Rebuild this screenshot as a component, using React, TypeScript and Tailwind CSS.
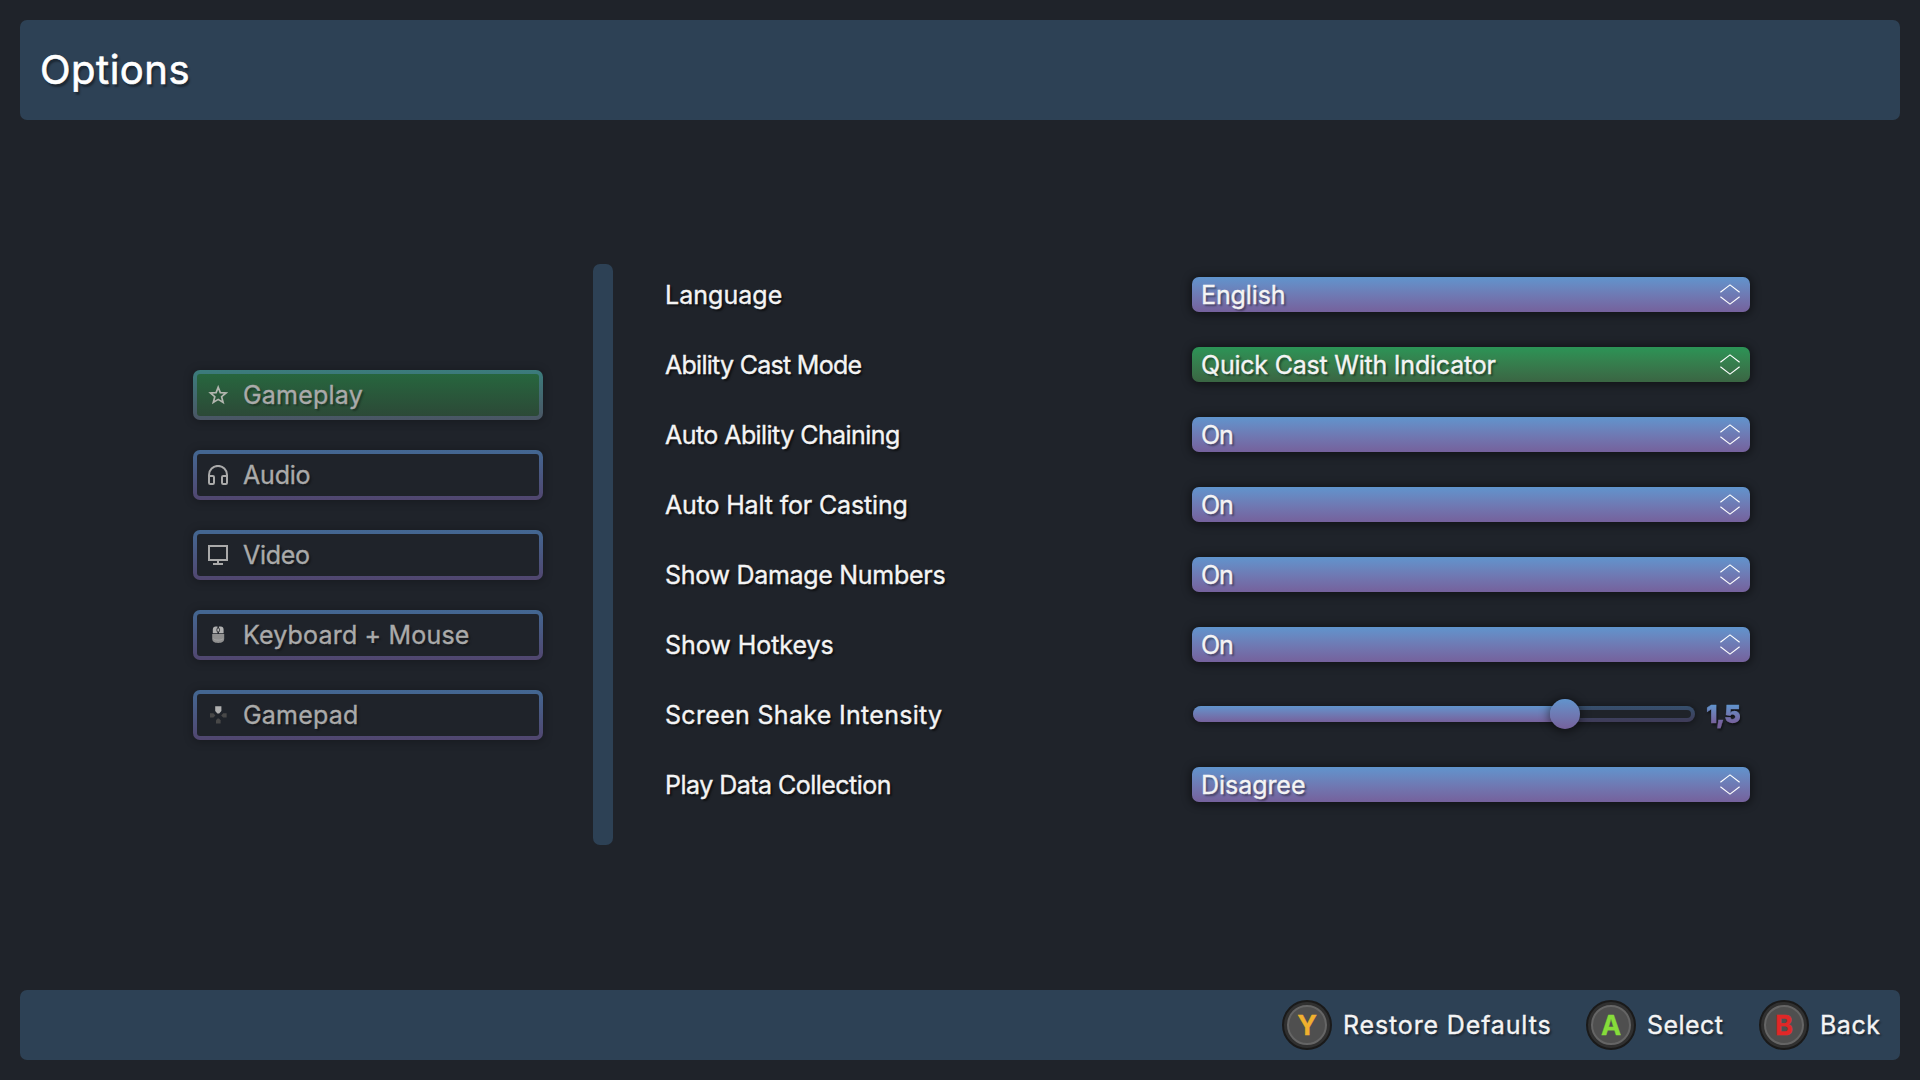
import React from 'react';

const StarIcon = () => (
  <svg width="20" height="20" viewBox="0 0 20 20" fill="none" stroke="#b4b7b0" strokeWidth="1.7">
    <path d="M10.2 2.2L12.3 7.6L18 8L13.6 11.7L15.1 17.4L10.2 14.4L5.3 17.4L6.8 11.7L2.4 8L8.1 7.6Z" />
  </svg>
);

const HeadphonesIcon = () => (
  <svg width="20" height="20" viewBox="0 0 20 20" fill="none" stroke="#aaaaaa" strokeWidth="2">
    <path d="M1 12V9.9a9 9 0 0 1 18 0V12" />
    <rect x="1" y="11" width="5" height="8" rx="1.2" />
    <rect x="14" y="11" width="5" height="8" rx="1.2" />
  </svg>
);

const MonitorIcon = () => (
  <svg width="20" height="20" viewBox="0 0 20 20" fill="none" stroke="#aaaaaa" strokeWidth="2">
    <rect x="1" y="1" width="18" height="14" />
    <path d="M10 15V18M5 19H15" />
  </svg>
);

const MouseIcon = () => (
  <svg width="20" height="20" viewBox="0 0 20 20">
    <path d="M4.8 8.2V4.8C4.8 2.6 6 1.6 7.6 1.6H9.5V8.2Z" fill="#b0b0b0" />
    <path d="M15.6 8.2V4.8C15.6 2.6 14.4 1.6 12.8 1.6H10.9V8.2Z" fill="#b0b0b0" />
    <rect x="8.9" y="3" width="2.6" height="4" rx="1.2" fill="#b0b0b0" stroke="#2a2d31" strokeWidth="0.9" />
    <path d="M4.2 9H16.2V13.6C16.2 16.6 14.4 18 10.2 18S4.2 16.6 4.2 13.6Z" fill="#8f8f8f" />
    <path d="M5.4 13.6C6.8 15.6 13.6 15.6 15 13.6" fill="none" stroke="#a8a8a8" strokeWidth="0.8" />
  </svg>
);

const DpadIcon = () => (
  <svg width="20" height="20" viewBox="0 0 20 20" fill="#484848">
    <path d="M7.2 1.2H13.4V6L11.2 8.6H9.4L7.2 6Z" fill="#b0b0b0" />
    <path d="M2 8.3H5.4L7.4 10.4L5.4 12.5H2Z" />
    <path d="M18.6 8.3H15.2L13.2 10.4L15.2 12.5H18.6Z" />
    <path d="M8 18.6V15.2L9.6 13.4H11L12.6 15.2V18.6Z" />
  </svg>
);

const SelectorIcon = () => (
  <svg width="20" height="21" viewBox="0 0 20 21" fill="none" stroke="#ffffff" strokeWidth="1.15">
    <path d="M0.4 8.2L10 0.9L19.6 8.2" />
    <path d="M0.4 12.8L10 20.1L19.6 12.8" />
  </svg>
);

const tabs = [
  { icon: <StarIcon />, title: 'Gameplay', tracking: 'tracking-[0.21px]', active: true },
  { icon: <HeadphonesIcon />, title: 'Audio', tracking: 'tracking-[-0.2px]' },
  { icon: <MonitorIcon />, title: 'Video', tracking: 'tracking-[-0.3px]' },
  { icon: <MouseIcon />, title: 'Keyboard + Mouse', tracking: 'tracking-[0.18px]' },
  { icon: <DpadIcon />, title: 'Gamepad', tracking: 'tracking-[0.21px]' },
];

const settings = [
  { label: 'Language', tracking: 'tracking-[0.04px]', value: 'English', valueTracking: 'tracking-[-0.1px]' },
  {
    label: 'Ability Cast Mode',
    tracking: 'tracking-[-0.72px]',
    value: 'Quick Cast With Indicator',
    valueTracking: 'tracking-[-0.22px]',
    active: true,
  },
  { label: 'Auto Ability Chaining', tracking: 'tracking-[-0.56px]', value: 'On', valueTracking: 'tracking-[-1px]' },
  { label: 'Auto Halt for Casting', tracking: 'tracking-[-0.16px]', value: 'On', valueTracking: 'tracking-[-1px]' },
  { label: 'Show Damage Numbers', tracking: 'tracking-[-0.29px]', value: 'On', valueTracking: 'tracking-[-1px]' },
  { label: 'Show Hotkeys', tracking: 'tracking-[-0.03px]', value: 'On', valueTracking: 'tracking-[-1px]' },
  { label: 'Screen Shake Intensity', tracking: 'tracking-[0.31px]', slider: { percent: 74, text: '1,5' } },
  { label: 'Play Data Collection', tracking: 'tracking-[-0.52px]', value: 'Disagree', valueTracking: 'tracking-[-0.05px]' },
];

const hints = [
  { button: 'Y', color: 'text-[#f0b02e]', label: 'Restore Defaults', tracking: 'tracking-[0.85px]', width: 'w-[304px]' },
  { button: 'A', color: 'text-[#86dc3a]', label: 'Select', tracking: 'tracking-[0.45px]', width: 'w-[173px]' },
  { button: 'B', color: 'text-[#e12727]', label: 'Back', tracking: 'tracking-[0.5px]', width: 'w-[121px]' },
];

const Select = ({ value, tracking, active }: { value?: string; tracking?: string; active?: boolean }) => (
  <div
    className={`flex h-[35px] w-[558px] items-center justify-between rounded-[7px] bg-linear-to-b pr-2.5 pl-[9px] shadow-[0_1px_8px_2px_rgba(0,0,0,0.45)] ${
      active ? 'from-[#2b9456] to-[#3a6543]' : 'from-[#6094cd] to-[#75619c]'
    }`}
  >
    <span className={`pt-px ${tracking} [text-shadow:2px_2px_2px_rgba(0,0,0,0.4)]`}>{value}</span>
    <SelectorIcon />
  </div>
);

const Slider = ({ percent, text }: { percent: number; text: string }) => (
  <div className="flex h-[35px] w-[558px] items-center pb-px pl-px">
    <div className="relative h-4 w-[502px] rounded-full border-4 border-transparent shadow-[0_1px_7px_1px_rgba(0,0,0,0.4)] [background:linear-gradient(#1f232a,#1f232a)_padding-box,linear-gradient(#36506d,#3f3b58)_border-box]">
      <div
        className="absolute -top-1 -left-1 h-4 rounded-l-full bg-linear-to-b from-[#6094cd] to-[#75619c]"
        style={{ width: `${percent + 1}%` }}
      />
      <div
        className="absolute -top-[11px] size-[30px] -translate-x-1/2 rounded-full bg-linear-to-b from-[#6094cd] to-[#75619c] shadow-[0_1px_10px_2px_rgba(0,0,0,0.45)]"
        style={{ left: `${percent + 0.4}%` }}
      />
    </div>
    <span className="ml-[11px] bg-linear-to-b from-[#6094cd] from-20% to-[#75619c] to-80% bg-clip-text leading-[30px] font-black tracking-[-1.2px] text-transparent drop-shadow-[1px_2px_1px_rgba(0,0,0,0.5)]">
      {text}
    </span>
  </div>
);

const App: React.FC = () => {
  return (
    <div className="flex h-screen w-screen flex-col overflow-hidden bg-[#1f232a] p-5 font-[Inter,sans-serif] text-[25px] leading-none whitespace-nowrap text-[#f4f4f4] [-webkit-text-stroke:0.35px]">
      <header className="flex h-[100px] shrink-0 items-center rounded-[7px] bg-[#2d4155] pl-5">
        <h1 className="text-[40px] tracking-[0.5px] text-white [text-shadow:2px_3px_2px_rgba(0,0,0,0.4)] [-webkit-text-stroke:0.6px]">
          Options
        </h1>
      </header>

      <main className="flex flex-1 items-center pl-[173px]">
        <nav className="flex w-[350px] flex-col gap-[30px]">
          {tabs.map((tab) => (
            <div
              key={tab.title}
              className={`flex h-[50px] items-center gap-[15px] rounded-[7px] border-4 border-transparent pl-[11px] text-[#aaaaaa] shadow-[0_1px_8px_1px_rgba(0,0,0,0.25)] ${
                tab.active
                  ? '[background:linear-gradient(#27663e,#2c4937)_padding-box,linear-gradient(#3b7c7c,#4a5564)_border-box]'
                  : '[background:linear-gradient(#1f232a,#1f232a)_padding-box,linear-gradient(#436792,#51466f)_border-box]'
              }`}
            >
              {tab.icon}
              <span className={`${tab.tracking} [text-shadow:2px_2px_2px_rgba(0,0,0,0.35)]`}>{tab.title}</span>
            </div>
          ))}
        </nav>

        <div className="-mt-px ml-[50px] h-[581px] w-5 rounded-[7px] bg-[#2d4155]" />

        <section className="ml-[52px] flex h-[580px] flex-col gap-[35px] pt-3">
          {settings.map((item) => (
            <div key={item.label} className="flex items-center">
              <span className={`w-[527px] pt-px ${item.tracking} [text-shadow:2px_2px_2px_rgba(0,0,0,0.6)]`}>
                {item.label}
              </span>
              {item.slider ? (
                <Slider percent={item.slider.percent} text={item.slider.text} />
              ) : (
                <Select value={item.value} tracking={item.valueTracking} active={item.active} />
              )}
            </div>
          ))}
        </section>
      </main>

      <footer className="flex h-[70px] shrink-0 items-center justify-end rounded-[7px] bg-[#2d4155] pr-5">
        {hints.map((hint) => (
          <div key={hint.button} className={`flex items-center gap-[11px] ${hint.width}`}>
            <div className="flex size-[50px] shrink-0 items-center justify-center rounded-full border-2 border-[#1a1a1a] bg-[#303030]">
              <div
                className={`flex size-[40px] items-center justify-center rounded-full border-2 border-[#656565] bg-[#4f4f4f] text-[27px] font-bold ${hint.color}`}
              >
                {hint.button}
              </div>
            </div>
            <span className={`${hint.tracking} [text-shadow:2px_2px_2px_rgba(0,0,0,0.4)]`}>{hint.label}</span>
          </div>
        ))}
      </footer>
    </div>
  );
};

export default App;
